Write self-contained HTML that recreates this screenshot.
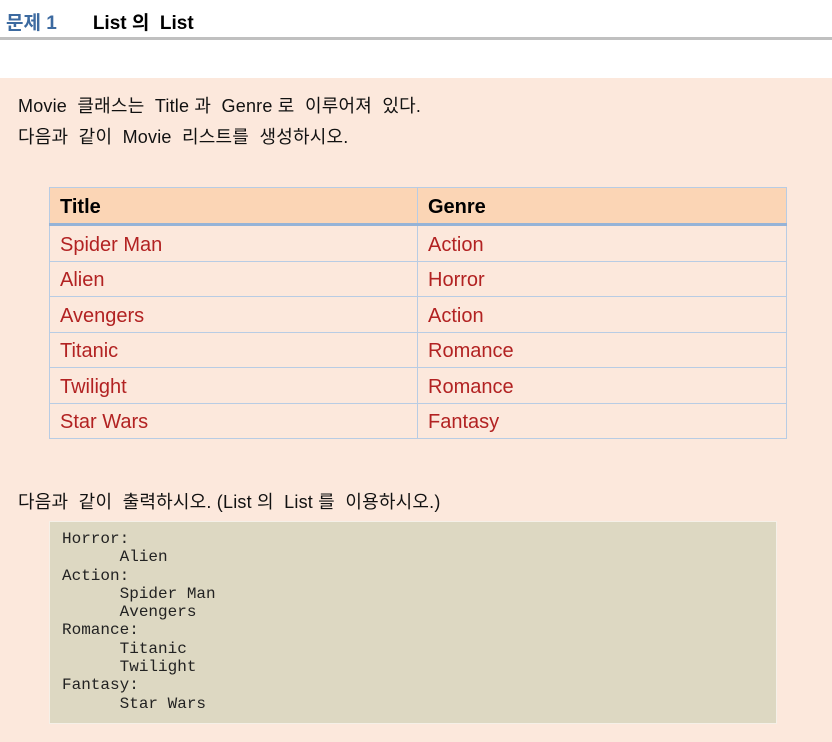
<!DOCTYPE html>
<html><head><meta charset="utf-8"><style>
body{margin:0;width:832px;height:742px;background:#fff;font-family:"Liberation Sans","Noto Sans CJK KR",sans-serif;position:relative;overflow:hidden}
.h{position:absolute;top:8px;left:6px;font-size:19px;font-weight:bold;white-space:nowrap}
.h .n{color:#3c6aa0}
.line{position:absolute;top:37px;left:0;width:832px;height:3px;background:#c0c0c0}
.bg{position:absolute;top:78px;left:0;width:832px;height:664px;background:#fce8dc}
.t{position:absolute;left:18px;font-size:18px;letter-spacing:0.2px;color:#111;white-space:nowrap}
table{position:absolute;left:49px;top:187px;width:738px;border-collapse:collapse;font-size:20px}
td,th{border:1px solid #b8cce4;padding:4px 10px 0;text-align:left;color:#b22222;height:30.5px}
th{background:#fbd5b5;color:#000;height:31px;border-bottom:3px solid #95b3d7}
pre{position:absolute;left:49px;top:521px;width:702px;height:179px;margin:0;padding:8px 12px 14px;background:#ddd8c2;border:1px solid #f5f0e8;font-family:"Liberation Mono",monospace;font-size:16px;line-height:18.3px;color:#222}
</style></head><body>
<div class="h"><span class="n">문제 1</span><span style="margin-left:36px">List 의&nbsp; List</span></div>
<div class="line"></div>
<div class="bg"></div>
<div class="t" style="top:92px">Movie&nbsp; 클래스는&nbsp; Title 과&nbsp; Genre 로&nbsp; 이루어져&nbsp; 있다.</div>
<div class="t" style="top:123px">다음과&nbsp; 같이&nbsp; Movie&nbsp; 리스트를&nbsp; 생성하시오.</div>
<table>
<tr><th style="width:347px">Title</th><th>Genre</th></tr>
<tr><td>Spider Man</td><td>Action</td></tr>
<tr><td>Alien</td><td>Horror</td></tr>
<tr><td>Avengers</td><td>Action</td></tr>
<tr><td>Titanic</td><td>Romance</td></tr>
<tr><td>Twilight</td><td>Romance</td></tr>
<tr><td>Star Wars</td><td>Fantasy</td></tr>
</table>
<div class="t" style="top:488px">다음과&nbsp; 같이&nbsp; 출력하시오. (List 의&nbsp; List 를&nbsp; 이용하시오.)</div>
<pre>Horror:
      Alien
Action:
      Spider Man
      Avengers
Romance:
      Titanic
      Twilight
Fantasy:
      Star Wars</pre>
</body></html>
